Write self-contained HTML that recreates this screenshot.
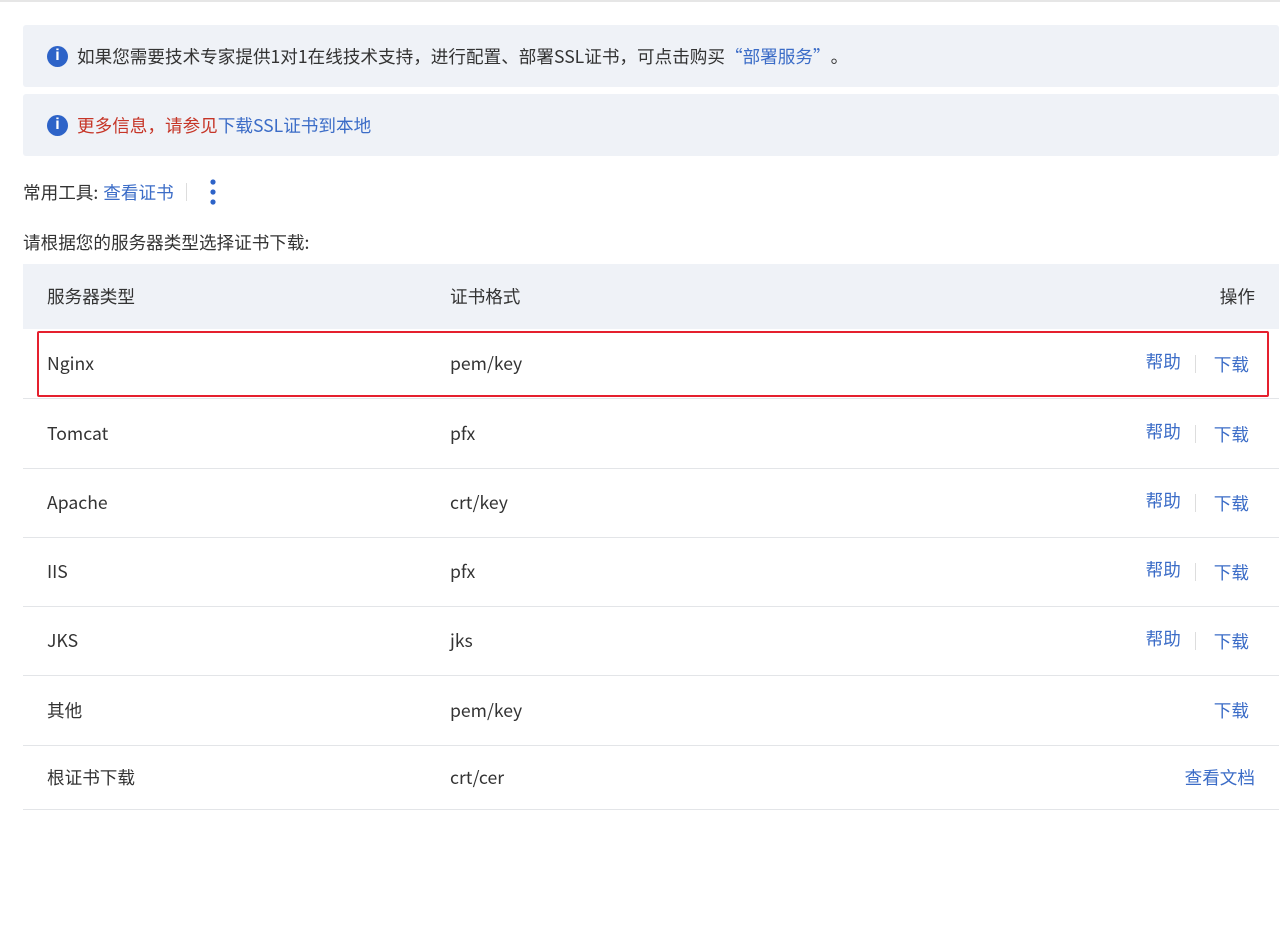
<!DOCTYPE html>
<html><head><meta charset="utf-8"><style>
*{margin:0;padding:0;box-sizing:border-box}
body{width:1280px;height:931px;background:#fff;font-family:"Noto Sans CJK SC","Liberation Sans",sans-serif;font-size:17.6px;color:#333;position:relative;overflow:hidden;border-top:2px solid #e6e6e6}
.box{position:absolute;left:23px;width:1256px;height:62px;background:#eff2f7;border-radius:3px;display:flex;align-items:center;padding-left:24px;padding-bottom:0}
.ic{width:21px;height:21px;border-radius:50%;background:#2d63c8;color:#fff;font:bold 16px "Liberation Sans",sans-serif;display:flex;align-items:center;justify-content:center;margin-right:9px}
a{color:#3b6cc7;text-decoration:none}
.red{color:#c63527}
.row{position:absolute;left:23px;width:1256px;height:70px;border-bottom:1px solid #e3e5e8;display:flex;align-items:center}
.c1{position:absolute;left:24px}.c2{position:absolute;left:427px}
.ops{position:absolute;right:30px;display:flex;align-items:center}
.sep{width:1px;height:18px;background:#ddd;margin:0 18px 0 14px}
</style></head><body>
<div class="box" style="top:23px"><span class="ic">i</span>如果您需要技术专家提供1对1在线技术支持，进行配置、部署SSL证书，可点击购买<a>“部署服务”</a>。</div>
<div class="box" style="top:92px"><span class="ic">i</span><span class="red">更多信息，请参见</span><a>下载SSL证书到本地</a></div>
<div style="position:absolute;left:23px;top:175px;display:flex;align-items:center;height:30px">常用工具: <a style="margin-left:5px">查看证书</a><span style="width:1px;height:18px;background:#ddd;margin:0 23px 0 12px"></span><svg width="6" height="26"><circle cx="3" cy="3" r="2.6" fill="#2d63c8"/><circle cx="3" cy="13" r="2.6" fill="#2d63c8"/><circle cx="3" cy="23" r="2.6" fill="#2d63c8"/></svg></div>
<div style="position:absolute;left:23px;top:228px">请根据您的服务器类型选择证书下载:</div>
<div class="row" style="top:262px;height:65px;background:#eff2f7;border:none"><span class="c1">服务器类型</span><span class="c2">证书格式</span><span class="ops" style="right:24px">操作</span></div>
<div class="row" style="top:327px"><span class="c1">Nginx</span><span class="c2">pem/key</span><span class="ops"><a style="margin-bottom:4px">帮助</a><span class="sep"></span><a style="margin-top:2px">下载</a></span></div>
<div style="position:absolute;left:37px;top:329px;width:1232px;height:66px;border:2px solid #e5202e;border-radius:2px"></div>
<div class="row" style="top:397px"><span class="c1">Tomcat</span><span class="c2">pfx</span><span class="ops"><a style="margin-bottom:4px">帮助</a><span class="sep"></span><a style="margin-top:2px">下载</a></span></div>
<div class="row" style="top:466px"><span class="c1">Apache</span><span class="c2">crt/key</span><span class="ops"><a style="margin-bottom:4px">帮助</a><span class="sep"></span><a style="margin-top:2px">下载</a></span></div>
<div class="row" style="top:535px"><span class="c1">IIS</span><span class="c2">pfx</span><span class="ops"><a style="margin-bottom:4px">帮助</a><span class="sep"></span><a style="margin-top:2px">下载</a></span></div>
<div class="row" style="top:604px"><span class="c1">JKS</span><span class="c2">jks</span><span class="ops"><a style="margin-bottom:4px">帮助</a><span class="sep"></span><a style="margin-top:2px">下载</a></span></div>
<div class="row" style="top:674px"><span class="c1">其他</span><span class="c2">pem/key</span><span class="ops"><a>下载</a></span></div>
<div class="row" style="top:743px;height:65px"><span class="c1">根证书下载</span><span class="c2">crt/cer</span><span class="ops" style="right:24px"><a>查看文档</a></span></div>
</body></html>
